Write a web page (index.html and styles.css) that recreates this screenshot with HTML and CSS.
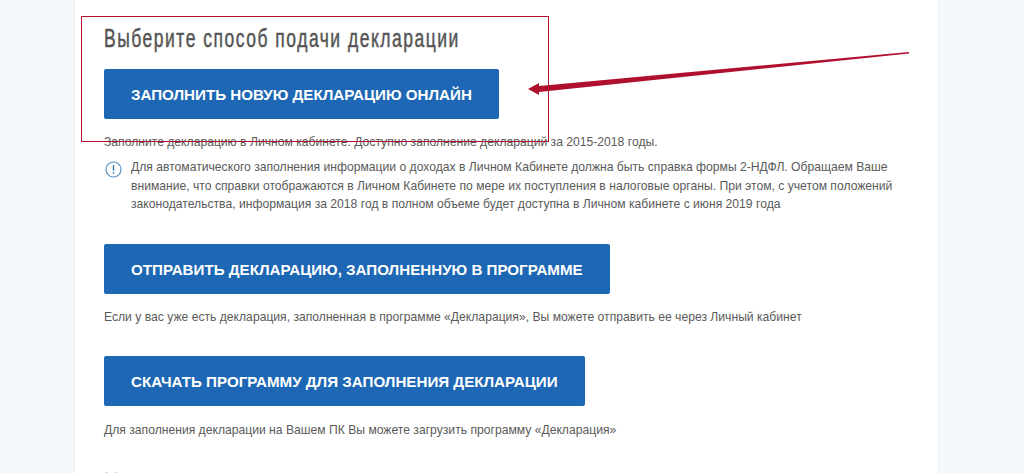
FILE: index.html
```html
<!DOCTYPE html>
<html lang="ru">
<head>
    <meta charset="UTF-8">
    <meta name="viewport" content="width=device-width, initial-scale=1.0">
    <title>Выберите способ подачи декларации</title>
    <link rel="stylesheet" href="styles.css">
</head>
<body>
    <main class="card">
        <h1 class="title">Выберите способ подачи декларации</h1>

        <a href="#" class="btn btn-first">ЗАПОЛНИТЬ НОВУЮ ДЕКЛАРАЦИЮ ОНЛАЙН</a>
        <p class="hint">Заполните декларацию в Личном кабинете. Доступно заполнение деклараций за 2015-2018 годы.</p>
        <div class="notice">
            <svg class="notice-icon" width="17" height="17" viewBox="0 0 17 17">
                <circle cx="8.5" cy="8.5" r="7.5" fill="none" stroke="#5b93c4" stroke-width="1.2"/>
                <path d="M8.5 4.2v5.6" stroke="#2f74b5" stroke-width="1.4"/>
                <path d="M8.5 11.2v1.6" stroke="#2f74b5" stroke-width="1.4"/>
            </svg>
            <p class="notice-text">Для автоматического заполнения информации о доходах в Личном Кабинете должна быть справка формы 2-НДФЛ. Обращаем Ваше внимание, что справки отображаются в Личном Кабинете по мере их поступления в налоговые органы. При этом, с учетом положений законодательства, информация за 2018 год в полном объеме будет доступна в Личном кабинете с июня 2019 года</p>
        </div>

        <a href="#" class="btn btn-second">ОТПРАВИТЬ ДЕКЛАРАЦИЮ, ЗАПОЛНЕННУЮ В ПРОГРАММЕ</a>
        <p class="hint">Если у вас уже есть декларация, заполненная в программе «Декларация», Вы можете отправить ее через Личный кабинет</p>

        <a href="#" class="btn btn-third">СКАЧАТЬ ПРОГРАММУ ДЛЯ ЗАПОЛНЕНИЯ ДЕКЛАРАЦИИ</a>
        <p class="hint hint-last">Для заполнения декларации на Вашем ПК Вы можете загрузить программу «Декларация»</p>

        <h2 class="title next-title">Мои декларации</h2>
    </main>

    <!-- пометки поверх скриншота -->
    <div class="mark-box"></div>
    <svg class="mark-arrow" width="1024" height="473" viewBox="0 0 1024 473">
        <path d="M528 89 L539 83 L539 86 L909 52 L909 53.5 L539 92 L539 95 Z" fill="#b0102f"/>
    </svg>
</body>
</html>
```

FILE: styles.css
```css
* {
    margin: 0;
    padding: 0;
    box-sizing: border-box;
}

html, body {
    height: 473px;
    overflow: hidden;
}

body {
    font-family: 'Liberation Sans', Arial, sans-serif;
    background-color: #f3f8fc;
    color: #5a5a5a;
    position: relative;
}

.card {
    width: 865px;
    height: 473px;
    margin-left: 74px;
    padding: 24px 30px 0 29px;
    background: #fff;
    border-left: 1px solid #eef2f5;
    border-right: 1px solid #eef2f5;
    overflow: hidden;
}

/* узкого шрифта нет, поэтому сжимаем обычный */
.title {
    font-size: 25px;
    line-height: 29px;
    font-weight: 400;
    letter-spacing: 2.15px;
    color: #555;
    -webkit-text-stroke: 0.5px #555;
    white-space: nowrap;
    transform: scaleX(0.7);
    transform-origin: left center;
}

.btn {
    display: flex;
    align-items: center;
    height: 50px;
    padding: 1px 27px 0;
    background-color: #1d67b4;
    border-radius: 2px;
    color: #fff;
    font-size: 15.15px;
    font-weight: 700;
    white-space: nowrap;
    text-decoration: none;
}

.btn-first {
    width: 395px;
    margin-top: 16px;
}

.btn-second {
    width: 506px;
    margin-top: 30px;
}

.btn-third {
    width: 481px;
    margin-top: 30px;
}

.hint {
    margin-top: 14px;
    font-size: 12.15px;
    line-height: 18px;
}

.hint-last {
    margin-top: 15px;
}

.notice {
    display: flex;
    gap: 9px;
    margin-top: 7px;
}

.notice-icon {
    flex: none;
    margin-top: 3px;
    margin-left: 1px;
}

.notice-text {
    width: 792px;
    font-size: 12.15px;
    line-height: 18.5px;
}

.next-title {
    margin-top: 29px;
}

.mark-box {
    position: absolute;
    left: 81px;
    top: 16px;
    width: 468px;
    height: 126px;
    border: 1.5px solid #b0102f;
}

.mark-arrow {
    position: absolute;
    left: 0;
    top: 0;
}
```
